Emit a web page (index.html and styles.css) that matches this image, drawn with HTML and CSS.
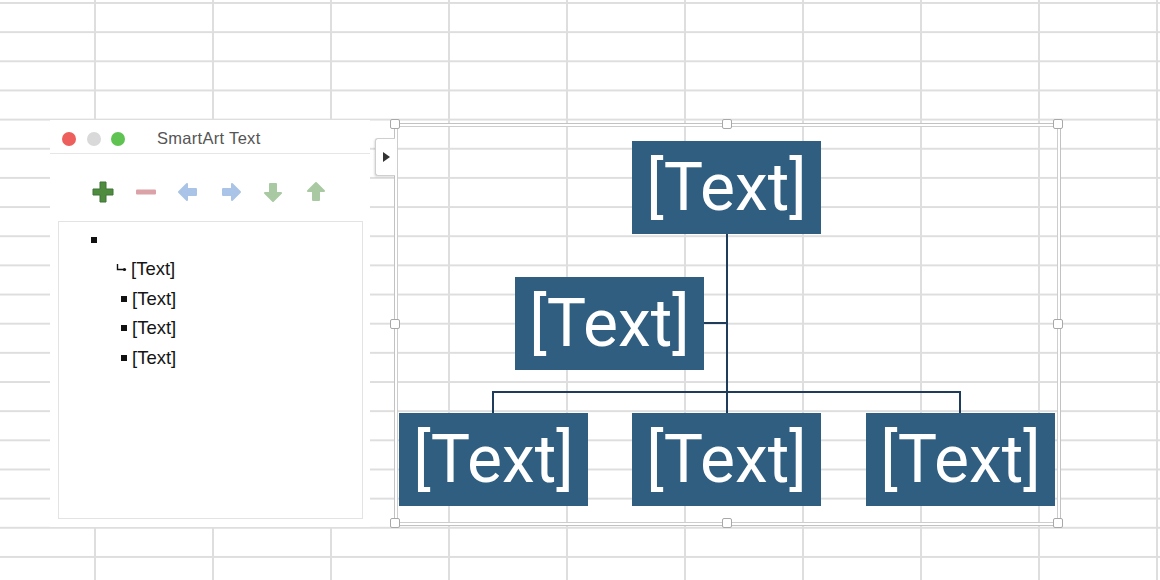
FILE: index.html
```html
<!doctype html>
<html>
  <head>
    <title>SmartArt Text</title>
    <link rel="stylesheet" href="styles.css">
  </head>
  <body>
    <div class="sheet">

      <div class="text-pane">
        <div class="titlebar">
          <div class="lights">
            <span class="light close"></span>
            <span class="light min"></span>
            <span class="light zoom"></span>
          </div>
          <span class="pane-title">SmartArt Text</span>
        </div>

        <div class="toolbar">
          <!-- add -->
          <svg class="tool" viewBox="0 0 22 22"><path d="M8 1h6v7h7v6h-7v7H8v-7H1V8h7z" fill="#4f8c40" stroke="#3f7534" stroke-width="1" stroke-linejoin="round"/></svg>
          <!-- remove -->
          <svg class="tool" viewBox="0 0 22 22"><rect x="1" y="8.5" width="20" height="5" rx="1" fill="#dba2a7"/></svg>
          <!-- promote -->
          <svg class="tool" viewBox="0 0 22 22"><path d="M2 11L10 3v5h9v6h-9v5z" fill="#a9c4e6" stroke="#a9c4e6" stroke-width="2" stroke-linejoin="round"/></svg>
          <!-- demote -->
          <svg class="tool" viewBox="0 0 22 22"><path d="M20 11L12 3v5H3v6h9v5z" fill="#a9c4e6" stroke="#a9c4e6" stroke-width="2" stroke-linejoin="round"/></svg>
          <!-- move down -->
          <svg class="tool" viewBox="0 0 22 22"><path d="M11 20L3 12h5V3h6v9h5z" fill="#a9c9a2" stroke="#a9c9a2" stroke-width="2" stroke-linejoin="round"/></svg>
          <!-- move up -->
          <svg class="tool" viewBox="0 0 22 22"><path d="M11 2L3 10h5v9h6v-9h5z" fill="#a9c9a2" stroke="#a9c9a2" stroke-width="2" stroke-linejoin="round"/></svg>
        </div>

        <ul class="outline">
          <li class="item level-1"><span class="bullet"></span></li>
          <li class="item level-2">
            <svg class="hook" viewBox="0 0 11 10"><path d="M1.5 1v5.5H8" fill="none" stroke="#111" stroke-width="1.4"/><circle cx="8.5" cy="6.5" r="1.6" fill="#111"/></svg>
            <span>[Text]</span>
          </li>
          <li class="item level-2"><span class="bullet"></span><span>[Text]</span></li>
          <li class="item level-2"><span class="bullet"></span><span>[Text]</span></li>
          <li class="item level-2"><span class="bullet"></span><span>[Text]</span></li>
        </ul>
      </div>

      <div class="chart">
        <button class="pane-toggle"><span class="arrow"></span></button>

        <svg class="links" width="663" height="399">
          <path d="M331 108V288M97 267H564M97 266V288M564 266V288M307 198H331" fill="none" stroke="#1f3c5b" stroke-width="2"/>
        </svg>

        <div class="node" style="left: 236px; top: 16px;">[Text]</div>
        <div class="node" style="left: 119px; top: 152px;">[Text]</div>
        <div class="node" style="left: 3px; top: 288px;">[Text]</div>
        <div class="node" style="left: 236px; top: 288px;">[Text]</div>
        <div class="node" style="left: 470px; top: 288px;">[Text]</div>

        <span class="handle" style="left: 0; top: 0;"></span>
        <span class="handle" style="left: 50%; top: 0;"></span>
        <span class="handle" style="left: 100%; top: 0;"></span>
        <span class="handle" style="left: 0; top: 50%;"></span>
        <span class="handle" style="left: 100%; top: 50%;"></span>
        <span class="handle" style="left: 0; top: 100%;"></span>
        <span class="handle" style="left: 50%; top: 100%;"></span>
        <span class="handle" style="left: 100%; top: 100%;"></span>
      </div>

    </div>
  </body>
</html>
```

FILE: styles.css
```css
html, body {
  margin: 0;
  padding: 0;
}
body {
  width: 1160px;
  height: 580px;
  overflow: hidden;
  background-color: #fff;
}
.sheet {
  position: relative;
  width: 1160px;
  height: 580px;
  background-color: #fff;
  background-image:
    linear-gradient(to right, #dedede 2px, transparent 2px),
    linear-gradient(to bottom, #dedede 2px, transparent 2px);
  background-size: 118px 100%, 100% 29.16px;
  background-position: 94px 0, 0 2px;
}

/* floating text pane */
.text-pane {
  position: absolute;
  left: 50px;
  top: 120px;
  width: 320px;
  height: 407px;
  background-color: #fff;
  display: flex;
  flex-direction: column;
  font-family: "Liberation Sans", Arial, sans-serif;
}
.titlebar {
  box-sizing: border-box;
  height: 34px;
  padding: 4px 0 0 12px;
  border-bottom: 1px solid #e6e6e6;
  display: flex;
  align-items: center;
}
.lights {
  display: flex;
  gap: 10.5px;
}
.light {
  width: 14px;
  height: 14px;
  border-radius: 50%;
}
.light.close {
  background-color: #ec5f5c;
}
.light.min {
  background-color: #d9d9d9;
}
.light.zoom {
  background-color: #5fc352;
}
.pane-title {
  margin-left: 32px;
  font-size: 16.5px;
  color: #555;
  letter-spacing: 0.3px;
}
.toolbar {
  box-sizing: border-box;
  height: 67px;
  padding: 9px 0 0 42px;
  display: flex;
  align-items: center;
  gap: 20.6px;
}
.tool {
  width: 22px;
  height: 22px;
}
.outline {
  flex: 1;
  list-style: none;
  margin: 0 7px 8px 8px;
  padding: 3px 0 0 0;
  border: 1px solid #e3e3e3;
  font-size: 18.5px;
  color: #151515;
}
.item {
  height: 29.5px;
  display: flex;
  align-items: center;
}
.level-1 {
  padding-left: 32px;
}
.level-2 {
  padding-left: 57px;
}
.bullet {
  width: 6px;
  height: 6px;
  background-color: #111;
  margin-right: 5px;
}
.level-2 .bullet {
  margin-left: 5px;
}
.hook {
  width: 11px;
  height: 10px;
  margin-right: 4px;
  margin-top: -2px;
}

/* SmartArt frame */
.chart {
  position: absolute;
  left: 396px;
  top: 125px;
  width: 663px;
  height: 399px;
}
.chart::before {
  content: "";
  position: absolute;
  left: -2px;
  top: -2px;
  right: -2px;
  bottom: -2px;
  border: 1px solid #c2c2c2;
  box-shadow: inset 0 0 0 2px #fff, inset 0 0 0 3px #cdcdcd;
}
.links {
  position: absolute;
  left: 0;
  top: 0;
}
.node {
  position: absolute;
  width: 189px;
  height: 93px;
  background-color: #2f5e81;
  color: #fff;
  display: flex;
  align-items: center;
  justify-content: center;
  font-family: Roboto, "Liberation Sans", sans-serif;
  font-size: 66px;
}
.handle {
  position: absolute;
  width: 10px;
  height: 10px;
  margin: -6px 0 0 -6px;
  background-color: #fff;
  border: 1px solid #a8a8a8;
  border-radius: 2px;
  box-sizing: border-box;
}
.pane-toggle {
  position: absolute;
  left: -21px;
  top: 13px;
  width: 20px;
  height: 38px;
  padding: 0;
  background-color: #fff;
  border: 1px solid #cfcfcf;
  border-right: none;
  border-radius: 3px 0 0 3px;
  box-shadow: -1px 1px 2px rgba(0, 0, 0, 0.12);
  display: flex;
  align-items: center;
  justify-content: center;
}
.pane-toggle .arrow {
  width: 0;
  height: 0;
  border-top: 5px solid transparent;
  border-bottom: 5px solid transparent;
  border-left: 7px solid #333;
  margin-left: 2px;
}
```
